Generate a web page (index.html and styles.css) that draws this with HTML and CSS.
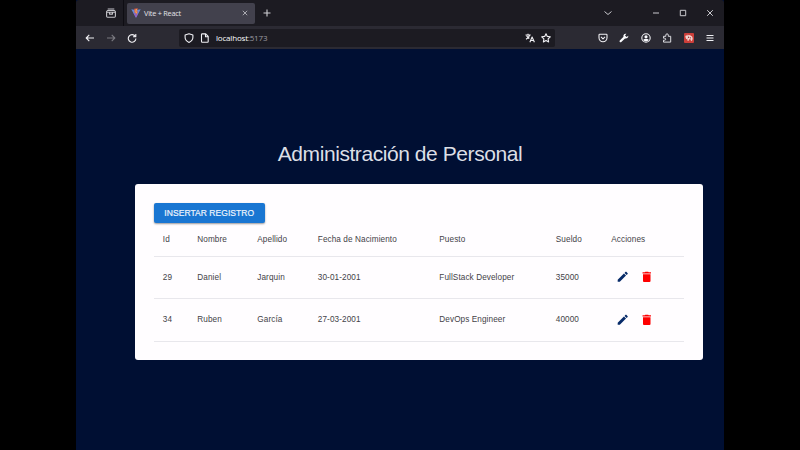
FILE: index.html
```html
<!DOCTYPE html>
<html lang="es">
<head>
<meta charset="utf-8">
<title>Vite + React</title>
<link rel="stylesheet" href="styles.css">
</head>
<body>
<svg class="defs" width="0" height="0">
  <symbol id="edit" viewBox="0 0 24 24"><path d="M3 17.25V21h3.750L17.810 9.940l-3.750-3.750L3 17.250zM20.710 7.040a.996.996 0 0 0 0-1.410l-2.340-2.340a.996.996 0 0 0-1.410 0l-1.830 1.830 3.750 3.750 1.830-1.830z"/></symbol>
  <symbol id="trash" viewBox="0 0 24 24"><path d="M5.300 7.500h13.400V19.500q0 1.800-1.800 1.800H7.100q-1.800 0-1.800-1.800ZM19.500 4h-4l-1-1h-5l-1 1h-4v2h15V4z"/></symbol>
</svg>
<div class="window">
  <div class="tabs">
    <svg class="icon view" viewBox="0 0 10 10"><path d="M1.700 1h6.600M.6 3.500 1.500 2.500h7l.9 1V8.300q0 .9-.9.9h-7q-.9 0-.9-.9ZM.6 4.300h8.800M3.500 4.500v1.600h3V4.500"/></svg>
    <div class="divider"></div>
    <div class="tab">
      <svg class="logo" viewBox="0 0 10 10"><path fill="#658bd8" d="M.3 1.300 5 2l4.700-.7L5 9.700Z"/><path fill="#8d62c5" d="M2.500 5.200 5 9.700 7.200 5.700Z"/><path fill="#e05b4c" d="M3.200.8 6.800.2 6 3.400l1.200.1L4.700 7.500 5 5H3.600Z"/><path fill="#f2c04f" d="m4.800 1.300 1.200-.2-.8 2.700.8.1-1 2V4.400h-.7Z"/></svg>
      <span class="tab-title">Vite + React</span>
      <svg class="close" viewBox="0 0 6 6"><path d="m.8.8 4.400 4.400m0-4.400L.8 5.200"/></svg>
    </div>
    <svg class="icon plus" viewBox="0 0 10 10"><path d="M5 1.500v7M1.500 5h7"/></svg>
    <div class="controls">
      <svg class="icon" viewBox="0 0 10 10"><path d="m1.500 3.500 3.500 3 3.500-3"/></svg>
      <svg class="icon minimize" viewBox="0 0 10 10"><path d="M2 5h6"/></svg>
      <svg class="icon" viewBox="0 0 10 10"><path d="M2.300 2.300h5.400v5.400H2.300Z"/></svg>
      <svg class="icon" viewBox="0 0 10 10"><path d="m2.200 2.200 5.600 5.600m0-5.600L2.200 7.800"/></svg>
    </div>
  </div>
  <div class="toolbar">
    <div class="nav">
      <svg class="icon" viewBox="0 0 10 10"><path d="M9 5H1.200M4.300 1.900 1.200 5l3.100 3.100"/></svg>
      <svg class="icon faded" viewBox="0 0 10 10"><path d="M1 5h7.800M5.700 1.900 8.800 5 5.700 8.100"/></svg>
      <svg class="icon" viewBox="0 0 10 10"><path d="M8.300 3.400A3.800 3.800 0 1 0 8.900 5.500M8.800.9v2.800H6"/></svg>
    </div>
    <div class="address">
      <svg class="icon" viewBox="0 0 10 10"><path d="M5 .8 8.900 2.100v2.200Q8.900 7.800 5 9.400 1.100 7.800 1.100 4.300V2.100Z"/></svg>
      <svg class="icon" viewBox="0 0 10 10"><path d="M2.200.9h3.500L8.200 3.400v5.100q0 .7-.7.7H2.200q-.7 0-.7-.7V1.600q0-.7.7-.7ZM5.500 1v2.700h2.700"/></svg>
      <span class="url">localhost<span class="port">:5173</span></span>
      <svg class="icon" viewBox="0 0 10 10"><path d="M.5 2h5.200M3 .8V2M4.700 2Q4 4.600 1 6.200M1.500 2.800 4.300 5.500M4.900 9.200 7.100 4l2.300 5.200M5.700 7.500h2.900"/></svg>
      <svg class="icon" viewBox="0 0 10 10"><path d="m5 .7 1.300 2.700 3 .4-2.200 2.100.5 3L5 7.500 2.400 8.900l.5-3L.7 3.800l3-.4Z"/></svg>
    </div>
    <div class="actions">
      <svg class="icon" viewBox="0 0 10 10"><path d="M1.700 1.300h6.600q.7 0 .7.700v2.800a4 4 0 0 1-8 0V2q0-.7.7-.7ZM3 3.900l2 1.900 2-1.900"/></svg>
      <svg class="icon" viewBox="0 0 10 10"><path fill="#fbfbfe" stroke="none" d="M9.300 2.700 7.600 4.100 6 2.500 7.400.8Q5.500.4 4.600 1.900q-.5.900-.1 1.900L.8 7.500q-.6.800 0 1.500.8.600 1.500 0L6 5.400q1.300.4 2.300-.3 1.200-.9 1-2.400Z"/></svg>
      <svg class="icon" viewBox="0 0 10 10"><circle cx="5" cy="5" r="4.200"/><path fill="#fbfbfe" stroke="none" d="M5 2.200a1.600 1.600 0 1 1 0 3.200 1.600 1.600 0 0 1 0-3.200ZM2.200 7.300Q2.500 6 3.900 6h2.200q1.400 0 1.700 1.300Q5 9.500 2.200 7.300Z"/></svg>
      <svg class="icon puzzle" viewBox="0 0 10 10"><path d="M1.500 3.300h2.300V2.100a1.200 1.200 0 0 1 2.500 0v1.200h2.400v5.800H1.500V7.200h1.200a1 1 0 0 0 0-2H1.500Z"/></svg>
      <svg class="extension" viewBox="0 0 10 10"><rect width="10" height="10" rx="1" fill="#cc3f3a"/><path fill="#f2d5d0" d="M1.300 3.600 2 2.300l1.200.5.7-1.200 1 1 1.200-.8.7 1.200 1.200.3.700 2-.4 2-1.200 1-.5-1.700-1.100-.5-.8 1.600-1.500-.3.3-1.800-1.300.6Z"/><path fill="#8d2425" d="m3.800 4 1.100-.6.400 1.300-1 .4ZM5.900 4.300l1.100.2-.2 1-.9-.3Z"/></svg>
      <svg class="icon" viewBox="0 0 10 10"><path d="M1.500 2.500h7M1.500 5h7M1.500 7.500h7"/></svg>
    </div>
  </div>
  <main class="page">
    <h1 class="title">Administración de Personal</h1>
    <section class="card">
      <button class="insert">INSERTAR REGISTRO</button>
      <div class="table">
        <div class="row head"><span>Id</span><span>Nombre</span><span>Apellido</span><span>Fecha de Nacimiento</span><span>Puesto</span><span>Sueldo</span><span>Acciones</span></div>
        <div class="row"><span>29</span><span>Daniel</span><span>Jarquin</span><span>30-01-2001</span><span>FullStack Developer</span><span>35000</span><span class="buttons"><svg class="edit"><use href="#edit"/></svg><svg class="trash"><use href="#trash"/></svg></span></div>
        <div class="row"><span>34</span><span>Ruben</span><span>García</span><span>27-03-2001</span><span>DevOps Engineer</span><span>40000</span><span class="buttons"><svg class="edit"><use href="#edit"/></svg><svg class="trash"><use href="#trash"/></svg></span></div>
      </div>
    </section>
  </main>
</div>
</body>
</html>
```
FILE: styles.css
```css
* { box-sizing: border-box; }
body { margin: 0; height: 450px; background: #000; overflow: hidden; font-family: "Liberation Sans", Arial, sans-serif; }
svg { display: block; flex: none; }
.defs { position: absolute; }
.window { width: 648px; height: 450px; margin: 0 auto; display: flex; flex-direction: column; background: #000f33; }
.icon { width: 10px; height: 10px; fill: none; stroke: #f0f0f4; stroke-width: 1.100; stroke-linejoin: round; }
.tabs { height: 26px; display: flex; align-items: center; background: #1c1b22; border-radius: 3px 3px 0 0; }
.view { margin-left: 30px; stroke: #c4c4c9; }
.divider { width: 1px; height: 26px; margin: 0 3px 0 7px; background: #0e0d13; }
.tab { width: 128px; height: 21px; padding: 0 7px 0 4px; display: flex; align-items: center; background: #42414d; border-radius: 2px; }
.logo { width: 10px; height: 10px; }
.tab-title { flex: 1; margin-left: 3px; font: 7.300px "Open Sans", sans-serif; letter-spacing: -.22px; color: #e4e4e9; }
.close { width: 6px; height: 6px; stroke: #c4c4ca; stroke-width: .8; }
.plus { margin-left: 7px; stroke: #cfcfd4; }
.controls { display: flex; gap: 17px; margin: 0 9px 0 auto; }
.controls .icon { stroke: #c9c9ce; stroke-width: 1; }
.controls .minimize { margin-left: 21px; }
.toolbar { height: 23px; display: flex; align-items: center; background: #2b2a33; }
.nav { display: flex; gap: 11px; padding-left: 9px; }
.faded { opacity: .4; }
.address { width: 376px; height: 18px; margin-left: 42px; padding: 0 4px 0 5px; display: flex; align-items: center; gap: 6px; background: #1c1b22; border-radius: 2px; }
.url { flex: 1; font: 500 8px "Open Sans", sans-serif; letter-spacing: -.19px; color: #fbfbfe; }
.port { color: #9c9ba3; font-weight: 400; }
.actions { flex: 1; display: flex; justify-content: space-between; padding: 0 9px 0 43px; }
.puzzle { stroke: #dcdce1; stroke-width: 1; }
.extension { width: 10px; height: 10px; }
.page { flex: 1; padding: 91.500px 21.500px 0 58.500px; }
.title { margin: 0 0 0 -36.500px; width: 604px; height: 43px; line-height: 25px; text-align: center; font-size: 21px; font-weight: 400; letter-spacing: -.43px; color: #dcdfe6; }
.card { height: 176px; padding: 19px 18.500px 0 19px; background: #fffdff; border-radius: 3px; }
.insert { display: block; width: 111.500px; height: 20.500px; padding: 0; border: 0; border-radius: 2px; background: #1976d2; color: #edf4fc; font: 8.500px "Liberation Sans", Arial, sans-serif; letter-spacing: .05px; -webkit-text-stroke: .2px #edf4fc; box-shadow: 0 1px 2px #0006; }
.row { height: 42.500px; display: grid; grid-template-columns: 34.500px 60px 60.500px 121.500px 116.500px 55.500px 1fr; align-items: center; border-bottom: 1px solid #e8e7ec; font-size: 8.200px; letter-spacing: .09px; color: #434247; white-space: nowrap; }
.row > span { padding-left: 9.300px; }
.head { height: 33.500px; }
.row .buttons { display: flex; gap: 10px; padding: 0 0 1px 14px; }
.edit, .trash { width: 13.500px; height: 13.500px; }
.edit { fill: #072b69; }
.trash { fill: #fe0000; }
```
